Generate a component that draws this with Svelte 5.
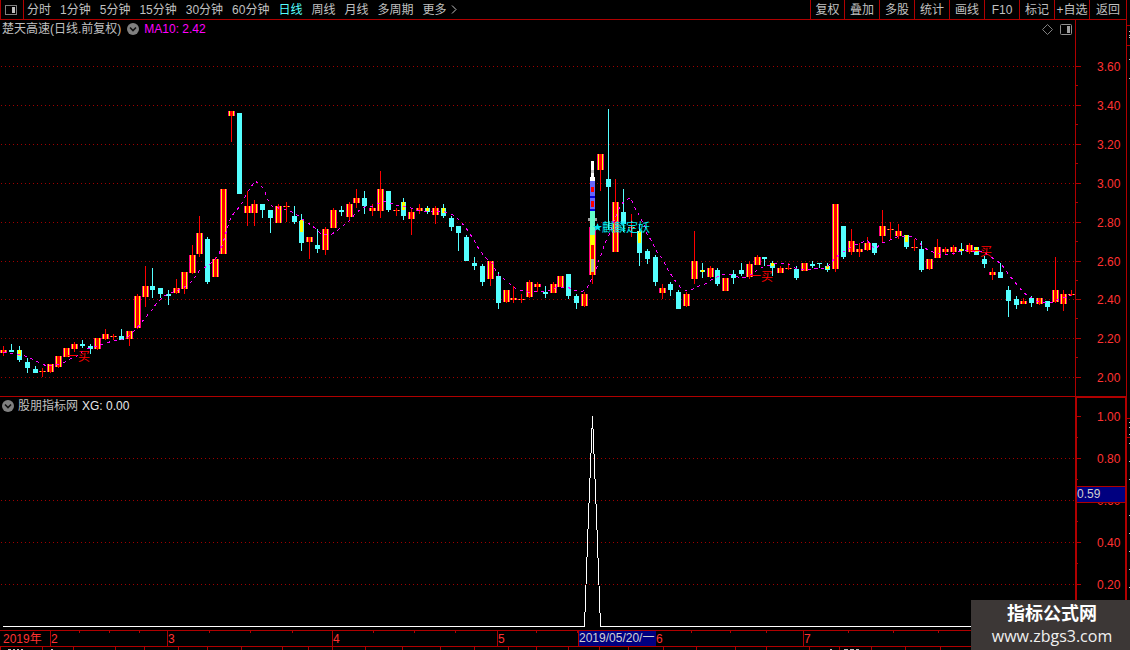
<script lang="ts">
  type Kind = 'up' | 'down';
  // kind, high, body top, body bottom, low, optional highlight top / bottom
  type Candle = [Kind, number, number, number, number, number?, number?];

  const periods = ['分时', '1分钟', '5分钟', '15分钟', '30分钟', '60分钟', '日线', '周线', '月线', '多周期'];
  const tools = ['复权', '叠加', '多股', '统计', '画线', 'F10', '标记', '+自选', '返回'];

  let activePeriod = $state('日线');

  const candles: Candle[] = [
    ['up', 346, 350, 353, 356], ['down', 344, 350, 352, 352], ['down', 346, 350, 360, 362, 350, 356],
    ['down', 358, 362, 368, 373], ['down', 366, 369, 373, 373], ['up', 368, 371, 372, 377],
    ['up', 364, 364, 372, 373], ['up', 356, 356, 367, 368], ['up', 348, 348, 357, 357],
    ['up', 342, 344, 349, 352], ['down', 340, 344, 346, 348], ['down', 344, 346, 349, 354],
    ['up', 338, 338, 349, 350], ['up', 329, 334, 339, 340], ['up', 334, 336, 337, 340],
    ['down', 329, 336, 340, 340], ['up', 331, 331, 339, 346], ['up', 294, 296, 328, 329],
    ['up', 266, 286, 297, 307], ['down', 268, 286, 290, 298], ['down', 288, 288, 294, 298],
    ['down', 290, 294, 296, 305], ['up', 279, 288, 293, 294], ['up', 272, 272, 289, 294],
    ['up', 245, 255, 273, 274], ['up', 216, 233, 254, 257], ['down', 237, 239, 282, 284],
    ['up', 257, 259, 277, 277], ['up', 189, 189, 254, 254], ['up', 111, 111, 116, 142],
    ['down', 113, 113, 194, 194], ['up', 191, 206, 213, 226], ['up', 200, 204, 213, 226],
    ['down', 204, 204, 210, 218], ['down', 210, 210, 218, 233], ['up', 204, 206, 223, 223],
    ['up', 202, 206, 207, 222], ['down', 206, 216, 222, 224], ['down', 214, 221, 243, 251, 220, 232],
    ['up', 237, 237, 242, 259], ['down', 229, 245, 249, 253], ['up', 227, 229, 250, 255],
    ['up', 208, 210, 228, 228], ['down', 206, 210, 212, 216], ['up', 202, 204, 217, 220],
    ['up', 189, 198, 203, 208], ['down', 191, 198, 206, 214], ['up', 204, 208, 211, 216],
    ['up', 171, 189, 211, 218], ['down', 191, 191, 210, 212], ['up', 208, 210, 211, 216],
    ['down', 198, 202, 216, 220, 202, 210], ['up', 208, 212, 219, 235], ['up', 204, 208, 211, 214],
    ['down', 206, 208, 212, 214, 208, 211], ['up', 206, 208, 215, 224], ['down', 204, 208, 216, 218, 208, 213],
    ['down', 216, 218, 227, 231], ['down', 226, 226, 233, 251], ['down', 235, 237, 261, 261],
    ['down', 257, 263, 266, 270], ['down', 264, 266, 282, 286], ['up', 261, 261, 279, 286],
    ['down', 272, 276, 303, 309], ['up', 290, 290, 302, 303], ['up', 286, 298, 300, 303],
    ['up', 294, 299, 300, 303], ['up', 280, 282, 297, 298], ['up', 282, 284, 287, 292],
    ['down', 286, 292, 294, 298], ['up', 282, 284, 293, 293], ['up', 276, 276, 287, 287],
    ['down', 274, 274, 296, 299], ['down', 294, 296, 303, 309], ['up', 292, 294, 306, 307],
    ['up', 227, 227, 275, 284], ['up', 154, 154, 170, 191], ['down', 109, 179, 187, 230],
    ['up', 179, 202, 252, 252], ['down', 189, 212, 224, 232], ['up', 214, 227, 228, 237],
    ['down', 224, 231, 253, 266, 231, 243], ['down', 249, 251, 259, 264], ['down', 255, 257, 282, 286],
    ['up', 284, 288, 293, 299], ['down', 282, 284, 290, 296], ['down', 290, 292, 309, 309],
    ['up', 292, 294, 306, 307], ['up', 231, 261, 279, 284], ['down', 263, 270, 272, 278, 270, 272],
    ['up', 266, 268, 277, 278], ['down', 268, 270, 284, 286], ['up', 278, 278, 291, 291],
    ['down', 270, 274, 278, 284], ['down', 263, 270, 274, 276], ['up', 261, 264, 277, 279],
    ['up', 255, 257, 265, 265], ['down', 257, 257, 259, 266], ['down', 261, 263, 268, 276, 263, 266],
    ['up', 266, 268, 273, 273], ['up', 263, 268, 269, 270], ['down', 266, 269, 278, 280],
    ['up', 263, 263, 271, 271], ['down', 261, 264, 266, 268], ['down', 263, 263, 264, 268],
    ['down', 263, 266, 270, 272, 266, 269], ['up', 204, 204, 269, 272], ['down', 226, 226, 257, 259],
    ['up', 229, 241, 252, 255], ['up', 243, 249, 252, 257], ['up', 237, 243, 250, 251],
    ['down', 243, 243, 253, 255], ['up', 210, 226, 236, 243], ['up', 222, 229, 230, 239],
    ['up', 224, 231, 236, 239], ['down', 235, 235, 247, 249, 235, 242], ['up', 239, 247, 248, 251],
    ['down', 241, 249, 270, 272], ['up', 259, 259, 269, 270], ['up', 239, 247, 258, 258],
    ['up', 247, 249, 252, 255], ['up', 245, 247, 252, 255], ['down', 243, 249, 251, 255, 249, 251],
    ['up', 243, 245, 252, 254], ['down', 247, 247, 255, 255, 247, 252], ['down', 256, 259, 264, 268],
    ['up', 268, 272, 275, 280], ['down', 263, 272, 278, 278], ['down', 286, 290, 301, 317],
    ['down', 296, 299, 305, 309], ['up', 298, 301, 304, 304], ['down', 296, 298, 303, 307],
    ['up', 298, 298, 304, 305], ['down', 301, 301, 307, 311], ['up', 257, 290, 302, 303],
    ['up', 290, 294, 304, 311], ['up', 290, 294, 295, 296]
  ];

  const maPoints =
    '3,352 9,353 15,354 25,356 30,358 36,361 42,364 47,366 55,365 63,363 70,359 77,356 84,350 94,347 106,343 ' +
    '113,341 120,340 128,337 135,330 141,323 146,317 152,310 156,304 162,298 167,294 173,292 183,288 190,283 ' +
    '195,277 199,271 204,268 210,264 215,259 219,254 223,243 227,229 229,223 231,217 235,212 241,205 244,200 ' +
    '246,194 251,187 255,181 261,185 264,190 267,197 269,203 273,207 284,209 290,211 296,214 302,219 308,223 ' +
    '315,228 320,233 327,235 332,234 338,230 344,225 350,220 355,214 361,209 367,206 373,206 384,201 390,203 ' +
    '396,205 402,206 408,207 414,209 420,211 427,212 432,211 445,212 451,214 456,217 461,222 466,228 470,234 ' +
    '474,240 477,246 481,252 486,258 492,263 495,269 499,276 504,279 510,284 516,289 523,291 528,292 534,292 ' +
    '540,291 547,291 558,287 568,287 571,289 577,291 583,291 587,288 590,282 593,275 597,267 599,260 602,252 ' +
    '604,246 607,239 610,233 615,218 621,205 625,200 631,198 633,204 636,210 639,215 642,221 645,227 647,234 ' +
    '651,240 654,246 657,252 662,258 665,264 668,270 672,276 676,282 681,288 687,291 693,289 699,286 705,284 ' +
    '711,280 717,277 724,274 730,274 735,276 741,278 748,277 753,273 759,269 765,266 771,265 777,263 783,263 ' +
    '790,265 795,268 801,269 813,269 819,268 825,269 830,264 836,257 843,252 855,245 861,243 867,240 872,246 ' +
    '875,249 882,243 888,241 894,238 900,236 912,236 917,240 922,246 928,250 933,252 940,254 952,254 958,252 ' +
    '964,250 970,251 982,251 988,255 994,259 1000,263 1005,269 1009,275 1014,281 1019,287 1024,293 1030,297 ' +
    '1037,301 1047,303 1053,302 1059,299 1067,297 1071,295';

  const prices = [
    ['3.60', 66], ['3.40', 105], ['3.20', 144], ['3.00', 183], ['2.80', 222],
    ['2.60', 261], ['2.40', 299], ['2.20', 338], ['2.00', 377]
  ] as [string, number][];
  const levels = [['1.00', 416], ['0.80', 458], ['0.60', 500], ['0.40', 542], ['0.20', 584]] as [string, number][];

  const months = [['2', 50], ['3', 167], ['4', 332], ['5', 497], ['6', 655], ['7', 803]] as [string, number][];
  const weekTicks = [79, 109, 139, 209, 250, 292, 373, 414, 455, 536, 577, 691, 730, 766, 848, 893, 938];
  const lowerTicks = [
    0, 42, 73, 115, 144, 178, 207, 241, 282, 308, 332, 365, 402, 440, 474,
    508, 536, 568, 599, 628, 663, 696, 735, 766, 809, 839, 871, 905, 940
  ];
  const signals = [[66, 361], [749, 281], [968, 256]];
  const sideMarks = [31, 35, 37, 59, 78, 422, 427, 434, 443, 461, 479, 515, 533, 551, 569, 587];

  const candleX = (i: number) => Math.round(3.24 + i * 7.848);
</script>

<div class="terminal">
  <div class="main">
    <header class="toolbar">
      <button type="button" class="layout-btn" aria-label="布局">
        <svg width="14" height="12" viewBox="0 0 14 12">
          <rect x="1.5" y="1.5" width="11" height="9" rx="1" fill="none" stroke="#808080" />
          <rect x="8" y="3" width="3" height="6" fill="#c0c0c0" />
        </svg>
      </button>
      <nav class="periods">
        {#each periods as period}
          <button type="button" class:active={period === activePeriod} onclick={() => (activePeriod = period)}>{period}</button>
        {/each}
        <button type="button" class="more">更多
          <svg width="6" height="9" viewBox="0 0 6 9"><path d="M1 0.5 L5 4.5 L1 8.5" fill="none" stroke="#c0c0c0" /></svg>
        </button>
      </nav>
      <div class="tools">
        {#each tools as tool}
          <button type="button">{tool}</button>
        {/each}
      </div>
    </header>

    <!-- Price panel -->
    <section class="panel price-panel">
      <div class="plot">
        <div class="title">
          <span>楚天高速(日线.前复权)</span>
          <svg class="chevron" width="12" height="12" viewBox="0 0 12 12">
            <circle cx="6" cy="6" r="6" fill="#808080" />
            <path d="M3 4.5 L6 7.5 L9 4.5" fill="none" stroke="#101010" stroke-width="1.6" />
          </svg>
          <span class="ma">MA10: 2.42</span>
          <div class="corner">
            <svg width="11" height="11" viewBox="0 0 11 11"><path d="M5.5 0.5 L10.5 5.5 L5.5 10.5 L0.5 5.5 Z" fill="none" stroke="#808080" /></svg>
            <svg width="12" height="11" viewBox="0 0 12 11">
              <rect x="0.5" y="0.5" width="11" height="10" rx="1" fill="none" stroke="#909090" />
              <rect x="7" y="2" width="3" height="7" fill="#a0a0a0" />
            </svg>
          </div>
        </div>
        <svg class="price-chart" viewBox="0 38 1075 358" preserveAspectRatio="none">
          {#each prices as [label, y] (label)}
            <line class="grid" x1="1" x2="1075" y1={y + 0.5} y2={y + 0.5} />
          {/each}

          {#each candles as [kind, high, top, bottom, low, markTop, markBottom], i}
            {@const x = candleX(i)}
            {#if kind === 'up'}
              <rect class="red" {x} y={high} width="1" height={low - high} />
              <rect class="pink" x={x - 3} y={top} width="7" height={bottom - top} />
              <rect class="yellow" x={x - 2} y={top} width="5" height={bottom - top} />
              <rect class="red" x={x - 1} y={top} width="3" height={bottom - top} />
            {:else}
              <rect class="cyan" {x} y={high} width="1" height={low - high} />
              <rect class="cyan" x={x - 2} y={top} width="5" height={bottom - top} />
              {#if markTop && markBottom}
                <rect class="yellow" x={x - 1} y={markTop} width="3" height={markBottom - markTop} />
              {/if}
            {/if}
          {/each}

          <polyline class="ma-line" points={maPoints} />

          <!-- Signal bar -->
          <rect x="588" y="218" width="9" height="3" fill="#a0a0a0" />
          <rect x="591" y="161" width="3" height="16" fill="#fff" />
          <rect x="591" y="170" width="3" height="3" fill="#c0c0c0" />
          <rect x="590" y="177" width="5" height="4" fill="#fff" />
          <rect x="590" y="181" width="5" height="30" fill="#6666ff" />
          <rect class="red" x="591" y="187" width="3" height="5" />
          <rect x="590" y="196" width="5" height="2" fill="#0000e0" />
          <rect class="red" x="591" y="201" width="3" height="6" />
          <rect x="590" y="209" width="5" height="2" fill="#0000e0" />
          <rect x="590" y="211" width="5" height="24" fill="#66ffcc" />
          <rect class="yellow" x="591" y="235" width="3" height="6" />
          <rect class="yellow" x="590" y="241" width="5" height="33" />
          <rect class="red" x="591" y="245" width="3" height="14" />
          <rect x="591" y="259" width="3" height="13" fill="#b0b0b0" />
          <rect class="red" x="591" y="272" width="3" height="3" />

          <path class="star" d="M597.5 223 L598.7 226 L602 226 L599.4 228 L600.4 231 L597.5 229.2 L594.6 231 L595.6 228 L593 226 L596.3 226 Z" />
          <text class="signal-name" x="602" y="232">麒麟定妖</text>
          {#each signals as [x, y]}
            <text class="buy" {x} {y}>一买</text>
          {/each}
        </svg>
      </div>
      <svg class="axis" width="51" height="376" viewBox="1075 20 51 376">
        <rect class="rule" x="1075" y="20" width="1" height="376" />
        {#each prices as [label, y], i (label)}
          <rect class="rule" x="1076" {y} width="5" height="1" />
          {#if i < prices.length - 1}
            <rect class="rule" x="1076" y={y + 19} width="2" height="1" />
          {/if}
          <text x="1097" y={y + 5}>{label}</text>
        {/each}
      </svg>
    </section>

    <!-- Indicator panel -->
    <section class="panel">
      <div class="plot">
        <div class="title sub">
          <svg class="chevron" width="12" height="12" viewBox="0 0 12 12">
            <circle cx="6" cy="6" r="6" fill="#808080" />
            <path d="M3 4.5 L6 7.5 L9 4.5" fill="none" stroke="#101010" stroke-width="1.6" />
          </svg>
          <span>股朋指标网</span>
          <span class="value">XG: 0.00</span>
        </div>
        <svg class="xg-chart" viewBox="0 415 1075 215" preserveAspectRatio="none">
          {#each levels.slice(1) as [label, y] (label)}
            <line class="grid" x1="1" x2="1075" y1={y + 0.5} y2={y + 0.5} />
          {/each}
          <polyline class="xg-line" points="3,626.5 584.5,626.5 588.5,516 592.5,416 596.5,516 600.5,626.5 1075,626.5" />
        </svg>
      </div>
      <svg class="axis" width="51" height="233" viewBox="1075 397 51 233">
        <rect class="rule" x="1075" y="397" width="2" height="233" />
        <rect class="rule" x="1125" y="397" width="1" height="233" />
        <rect class="rule" x="1075" y="397" width="51" height="1" />
        {#each levels as [label, y] (label)}
          <rect class="rule" x="1077" {y} width="4" height="1" />
          <rect class="rule" x="1077" y={y + 21} width="1" height="1" />
          <text x="1097" y={y + 5}>{label}</text>
        {/each}
        <rect x="1077" y="487" width="48" height="15" fill="#000080" />
        <rect class="rule" x="1077" y="486" width="48" height="1" />
        <rect class="rule" x="1077" y="502" width="48" height="1" />
        <text class="cursor-value" x="1077" y="498">0.59</text>
      </svg>
    </section>

    <!-- Time axis -->
    <svg class="timeline" viewBox="0 630 1126 20" preserveAspectRatio="none">
      <rect class="rule" x="0" y="630" width="1126" height="1" />
      <rect class="rule" x="0" y="646" width="1126" height="1" />
      {#each weekTicks as x}
        <rect class="rule" {x} y="631" width="1" height="2" />
      {/each}
      {#each lowerTicks as x}
        <rect class="rule" {x} y="647" width="1" height="3" />
      {/each}
      <text x="3" y="643">2019年</text>
      {#each months as [label, x] (label)}
        <rect class="rule" {x} y="631" width="1" height="15" />
        <text x={x + 1} y="643">{label}</text>
      {/each}
      <rect x="578" y="631" width="78" height="15" fill="#000080" />
      <rect class="rule" x="578" y="631" width="1" height="15" />
      <text class="cursor-value" x="579" y="642">2019/05/20/一</text>
      <path d="M8 649.5 h3 m2 0 h2 m2 0 h2 m2 0 h2 m28 0 h2 m777 0 h2 m12 0 h4 m2 0 h4 m2 0 h3" stroke="#c0c0c0" />
    </svg>
  </div>

  <svg class="side" width="4" height="650" viewBox="0 0 4 650">
    <rect class="rule" x="0" y="0" width="1" height="650" />
    <rect class="rule" x="1" y="25" width="3" height="1" />
    <rect class="rule" x="1" y="45" width="3" height="1" />
    <rect class="rule" x="1" y="418" width="3" height="1" />
    <rect class="rule" x="1" y="437" width="3" height="1" />
    {#each sideMarks as y}
      <rect x="3" {y} width="1" height="1" fill="#c0c0c0" />
    {/each}
  </svg>

  <div class="watermark">
    <strong>指标公式网</strong>
    <span>www.zbgs3.com</span>
  </div>
</div>

<style>
  :global(body) {
    margin: 0;
    background: #000;
  }

  .terminal {
    position: relative;
    display: flex;
    overflow: hidden;
    background: #000;
    color: #c0c0c0;
    font: 12px/18px 'Liberation Sans', 'Noto Sans CJK SC', sans-serif;
  }

  .main {
    flex: 1;
    min-width: 0;
    display: flex;
    flex-direction: column;
  }

  svg {
    display: block;
    flex-shrink: 0;
    shape-rendering: crispEdges;
  }

  button {
    padding: 0;
    border: 0;
    background: none;
    color: inherit;
    font: inherit;
    white-space: nowrap;
    cursor: pointer;
  }

  /* Toolbar */
  .toolbar {
    display: flex;
    height: 19px;
    border-bottom: 1px solid #b00000;
  }

  .layout-btn {
    display: flex;
    align-items: center;
    justify-content: center;
    width: 24px;
    border: solid #b00000;
    border-width: 0 1px;
    box-sizing: border-box;
  }

  .layout-btn svg {
    margin-right: 2px;
  }

  .periods {
    display: flex;
    gap: 9px;
    padding-left: 3px;
  }

  .periods .active {
    color: #54ffff;
  }

  .more {
    display: flex;
    align-items: center;
    gap: 4px;
  }

  .more svg {
    shape-rendering: auto;
  }

  .tools {
    display: flex;
    margin-left: auto;
  }

  .tools button {
    width: 35px;
    box-sizing: border-box;
    border-left: 1px solid #b00000;
  }

  .tools button:first-child {
    width: 34px;
  }

  .tools button:last-child {
    width: 37px;
  }

  /* Panels */
  .panel {
    display: flex;
  }

  .price-panel {
    border-bottom: 1px solid #b00000;
  }

  .plot {
    flex: 1;
    min-width: 0;
  }

  .title {
    display: flex;
    align-items: center;
    gap: 5px;
    height: 18px;
    padding: 0 3px 0 2px;
  }

  .title.sub {
    gap: 4px;
  }

  .title .chevron,
  .star {
    shape-rendering: auto;
  }

  .title .chevron {
    margin-left: 1px;
  }

  .title.sub .chevron {
    margin-left: 0;
  }

  .ma {
    color: #ff00ff;
  }

  .value {
    color: #e8e8e8;
  }

  .corner {
    display: flex;
    gap: 7px;
    margin-left: auto;
  }

  .corner svg {
    shape-rendering: auto;
  }

  .price-chart {
    width: 100%;
    height: 358px;
  }

  .xg-chart {
    width: 100%;
    height: 215px;
  }

  .timeline {
    width: 100%;
    height: 20px;
  }

  .grid {
    stroke: #a00000;
    stroke-dasharray: 1 3;
  }

  .rule {
    fill: #b00000;
  }

  .red {
    fill: #ff0000;
  }

  .pink {
    fill: #ff0080;
  }

  .yellow {
    fill: #ffff00;
  }

  .cyan {
    fill: #54ffff;
  }

  .ma-line {
    fill: none;
    stroke: #ff00ff;
    stroke-dasharray: 3 4;
  }

  .xg-line {
    fill: none;
    stroke: #fff;
  }

  .axis text,
  .timeline text {
    fill: #ff3232;
  }

  .axis .cursor-value,
  .timeline .cursor-value {
    fill: #d0d0d0;
  }

  .star,
  .signal-name {
    fill: #00e8f0;
  }

  .buy {
    fill: #ff0000;
  }

  /* Site mark */
  .watermark {
    position: absolute;
    right: 0;
    bottom: 0;
    display: flex;
    flex-direction: column;
    align-items: center;
    box-sizing: border-box;
    width: 159px;
    height: 50px;
    padding: 4px 0 0 3px;
    background: #3c3736;
    color: #fff;
  }

  .watermark strong {
    font: 700 18px/21px 'Liberation Sans', 'Noto Sans CJK SC', sans-serif;
  }

  .watermark span {
    font: 16px/22px 'Open Sans', sans-serif;
    color: #f0f0f0;
  }
</style>
